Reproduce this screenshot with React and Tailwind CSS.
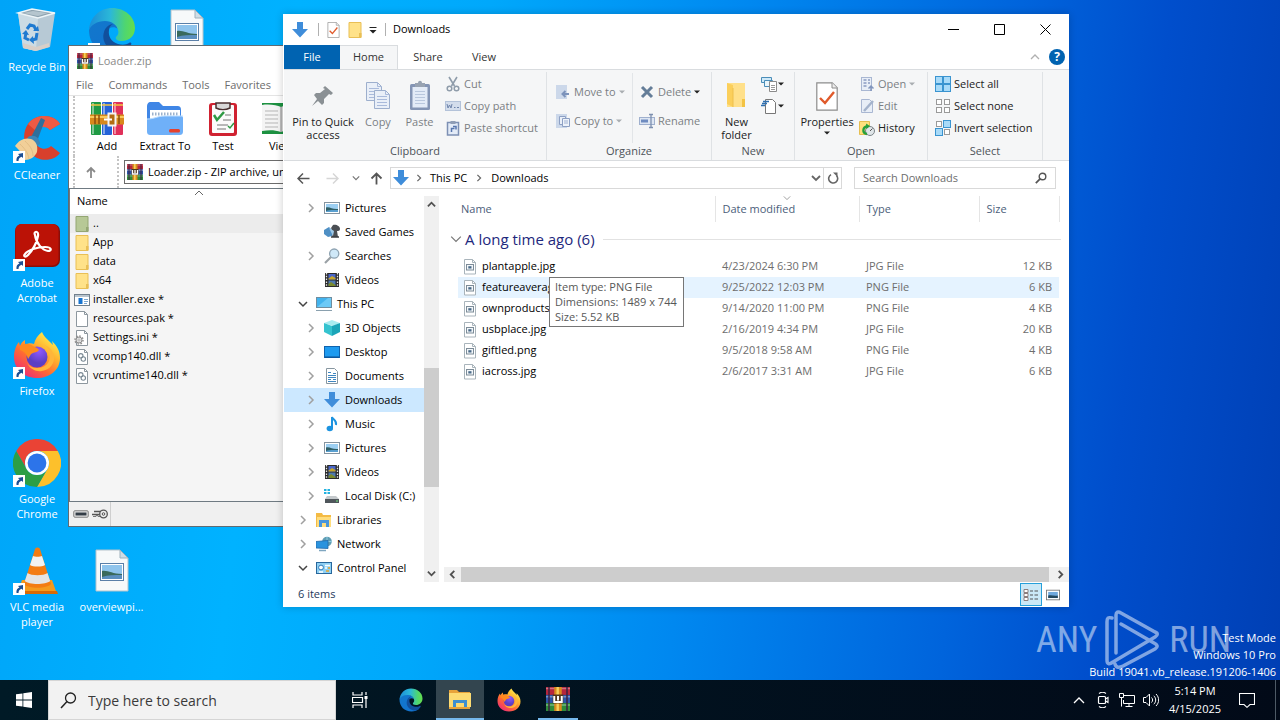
import React from 'react';

/* ---------- generic icon helper ---------- */
function Svg({ size = 16, box = 16, className = '', children }) {
  return (
    <svg
      width={size}
      height={size}
      viewBox={`0 0 ${box} ${box}`}
      fill="none"
      aria-hidden="true"
      className={`shrink-0 ${className}`}
    >
      {children}
    </svg>
  );
}

/* ---------- application logos ---------- */
function EdgeLogo({ size, id }) {
  return (
    <Svg size={size} box={48}>
      <defs>
        <linearGradient id={`${id}a`} x1="2" y1="18" x2="46" y2="20" gradientUnits="userSpaceOnUse">
          <stop offset="0" stopColor="#1c8fd8" />
          <stop offset=".45" stopColor="#2bb8d8" />
          <stop offset=".8" stopColor="#4fd66f" />
          <stop offset="1" stopColor="#63dd50" />
        </linearGradient>
        <linearGradient id={`${id}b`} x1="4" y1="16" x2="26" y2="46" gradientUnits="userSpaceOnUse">
          <stop offset="0" stopColor="#1277cc" />
          <stop offset="1" stopColor="#1273cf" />
        </linearGradient>
      </defs>
      <path d="M1 23C3 15 11 12 18 13c7 1 11 5 12 9-4-3-10-2-12 4-2 8 5 16 15 17 3 0 6-1 8-2-4 4-10 6-16 6C11 47 1 37 1 23Z" fill={`url(#${id}b)`} />
      <path d="M16 25c-3 9 4 19 14 20 5 0 10-2 13-7 1-2 0-3-2-2-3 2-7 2-11 1-7-2-10-8-9-14 0-3 2-5 4-6-4 0-8 4-9 8Z" fill="#114f9c" />
      <path d="M1 23C2 10 12 1 24 1c13 0 23 9 23 20 0 8-6 13-13 13-5 0-7-2-6-4 2-2 3-4 2-7-1-5-6-9-13-9-8 0-14 4-16 9Z" fill={`url(#${id}a)`} />
    </Svg>
  );
}

function FirefoxLogo({ size, id }) {
  return (
    <Svg size={size} box={48}>
      <defs>
        <linearGradient id={`${id}a`} x1="40" y1="5" x2="10" y2="44" gradientUnits="userSpaceOnUse">
          <stop offset="0" stopColor="#fff150" />
          <stop offset=".35" stopColor="#ffb02e" />
          <stop offset=".65" stopColor="#ff6a33" />
          <stop offset="1" stopColor="#ee2f74" />
        </linearGradient>
        <radialGradient id={`${id}b`} cx="26" cy="20" r="12" gradientUnits="userSpaceOnUse">
          <stop offset="0" stopColor="#9059ff" />
          <stop offset="1" stopColor="#5b3fc4" />
        </radialGradient>
      </defs>
      <path d="M29 1c1 3 3 5 6 8l5 5-1-4c5 5 8 10 8 17 0 12-10 20-23 20S1 38 1 26c0-6 2-12 5-15l1 4c1-3 3-5 5-6v5c3-2 6-2 9-1 1-5 4-9 8-12Z" fill={`url(#${id}a)`} />
      <circle cx="24" cy="26" r="10.5" fill={`url(#${id}b)`} />
      <path d="M7 15c4-3 9-3 13 0 2 1 5 2 6 4-1 2-4 2-6 3-3 1-3 4-5 6-1-5-4-8-8-9Z" fill="#ff8a1e" />
      <path d="M29 13c5 2 8 6 8 12 0 8-6 12-13 12-4 0-8-2-10-5 3 6 9 9 15 8 8-1 13-8 12-15-1-6-6-10-12-12Z" fill="#ffb63a" />
    </Svg>
  );
}

function ChromeLogo() {
  return (
    <Svg size={48} box={48}>
      <path d="M24 12H44.8A24 24 0 0 0 3.2 12l10.4 18A12 12 0 0 1 24 12Z" fill="#ea4335" />
      <path d="M34.4 30 24 48A24 24 0 0 0 44.8 12H24a12 12 0 0 1 10.4 18Z" fill="#fdc02b" />
      <path d="M13.6 30 3.2 12A24 24 0 0 0 24 48l10.4-18a12 12 0 0 1-20.8 0Z" fill="#2c9e46" />
      <circle cx="24" cy="24" r="12" fill="#fff" />
      <circle cx="24" cy="24" r="9.4" fill="#2c74ea" />
    </Svg>
  );
}

function AcrobatLogo() {
  return (
    <Svg size={48} box={48}>
      <rect x="2" y="1" width="45" height="43" rx="7" fill="#8b0d08" />
      <rect x="2.500" y="1" width="43" height="41.500" rx="6" fill="#bb1206" />
      <path d="M22 12c-2-4 4-5 3 1-1 7-6 15-10 19-3 3-5 1-3-1 3-4 12-7 20-7 7 0 7 4 3 4-6-1-12-8-13-16Z" stroke="#fff" strokeWidth="2.200" strokeLinejoin="round" />
    </Svg>
  );
}

function CCleanerLogo() {
  return (
    <Svg size={48} box={48}>
      <path d="M47 9C41-1 23-2 15 9c-8 12-3 28 9 34 9 4 19 1 23-5l-9-7c-3 3-8 4-12 1-6-4-6-13-1-18 4-4 9-3 12 1Z" fill="#d8402c" />
      <path d="M47 9C41-1 23-2 15 9l8 7c4-5 11-5 14-1Z" fill="#ee5a44" />
      <path d="m28 3 4 2-9 24-7-3Z" fill="#2f6f9c" />
      <path d="M15 22c5-3 12 0 12 7l-5 4-10-5Z" fill="#3c86b8" />
      <path d="M2 31c4-6 10-9 16-7 5 2 7 6 6 13-2 5-7 8-12 8C10 39 6 35 2 31Z" fill="#f1cf98" />
      <path d="M7 29c4 4 8 8 9 15M12 26c4 4 8 8 8 15" stroke="#e2bd85" />
    </Svg>
  );
}

function VlcLogo() {
  return (
    <Svg size={48} box={48}>
      <path d="M9 33h30l5 14H4Z" fill="#f59a1e" />
      <path d="M4 44h40l1 3H3Z" fill="#d96a06" />
      <path d="M22 2c1-2 4-2 5 0l11 35c-4 5-23 5-27 0Z" fill="#f37c13" />
      <path d="m20 9-3 9c3 2 12 2 15 0l-3-9c-2 1-7 1-9 0Z" fill="#f2f2f2" />
      <path d="m14.500 26-2.700 8c4 4 21 4 25.400 0l-2.700-8c-4 3-16 3-20 0Z" fill="#e4e4e4" />
    </Svg>
  );
}

function RecycleBin() {
  return (
    <Svg size={48} box={48}>
      <path d="m5 6 5 35 13 3 14-4 5-34-17 5Z" fill="#b7c9d5" />
      <path d="m5 6 5 35 13 3 2-33Z" fill="#cbdbe4" />
      <path d="m5 6 14-4 23 4-17 5Z" fill="#8fa3b0" stroke="#eef5f8" strokeWidth="1.500" />
      <path d="m10 6 10-2 15 2-10 3Z" fill="#b5c5ce" />
      <path d="m10 36 13 4 13-4v4l-13 4-13-3Z" fill="#d8cfc8" />
      <path d="m14 22 3-4 4 1 2 4M24 26l-1 6-4 1M16 33l-4-2 1-5" stroke="#1f7ad0" strokeWidth="3" />
      <path d="m20 24 6 0-1-5ZM20 29l-4 4 5 4ZM9 27l4-4 3 5Z" fill="#1f7ad0" />
    </Svg>
  );
}

function PictureFile() {
  return (
    <Svg size={48} box={48}>
      <path d="M8 3h24l8 8v33H8Z" fill="#f7f9fa" stroke="#b5c3cb" />
      <path d="M32 3v8h8Z" fill="#cfdde6" stroke="#9eb1bd" />
      <rect x="12.500" y="16.500" width="23" height="17" fill="#fff" stroke="#5a7fa8" />
      <path d="M14 18h20v14H14Z" fill="#8fc4ec" />
      <path d="M14 24c6-1 10 3 20 3v5H14Z" fill="#3a6a5c" />
      <path d="M14 30c6-2 12-2 20-2v4H14Z" fill="#5b8fbf" />
    </Svg>
  );
}

function RarLogo({ size = 16 }) {
  return (
    <Svg size={size} box={16}>
      <rect y="0" width="16" height="5.300" fill="#b5263c" />
      <rect y="5.300" width="16" height="5.400" fill="#2c55a8" />
      <rect y="10.700" width="16" height="5.300" fill="#2e8b3a" />
      <path d="M0 1h16M0 6.500h16M0 12h16" stroke="#fff" strokeOpacity=".35" />
      <path d="M2 0v16M14 0v16" stroke="#3a2140" />
      <rect x="5.500" width="5" height="16" fill="#d98b1e" />
      <rect x="7" width="1.600" height="16" fill="#f6cf5a" />
      <rect x="4.500" y="5" width="7" height="6" fill="#50361c" />
      <path d="M5.500 6v4h5V6M8 6v3" stroke="#fff" strokeWidth="1.300" />
    </Svg>
  );
}

function RarBooks() {
  return (
    <Svg size={36} box={36}>
      <rect x="2" y="1" width="10" height="33" rx="1" fill="#1f9a44" />
      <rect x="13" y="1" width="10" height="33" rx="1" fill="#2563d8" />
      <rect x="24" y="1" width="10" height="33" rx="1" fill="#e0305a" />
      <path d="M4 2v31M15 2v31M26 2v31" stroke="#fff" strokeOpacity=".45" strokeWidth="2" />
      <path d="M2 4h10M13 4h10M24 4h10" stroke="#f4c542" strokeWidth="1.500" />
      <rect x="1" y="13.500" width="34" height="10" fill="#d8891c" />
      <path d="M1 16h34" stroke="#f8c95c" strokeWidth="2" />
      <path d="M6 14v9M10 14v9M30 14v9" stroke="#8a4f0c" strokeWidth="1.500" />
      <rect x="19.500" y="12.500" width="7" height="12" stroke="#f4f4f4" strokeWidth="2" fill="#b26c12" />
      <path d="M15 18.500h8" stroke="#fff" strokeWidth="2" />
    </Svg>
  );
}

function ExtractIcon() {
  return (
    <Svg size={38} box={38}>
      <path d="M1 7c0-3 1-5 4-5h8l4 4h14c3 0 4 1 4 4v14H1Z" fill="#3f86e6" />
      <path d="M4 10h30v10H4Z" fill="#fff" />
      <path d="M6 14h26" stroke="#9cb2cc" strokeWidth="3" strokeDasharray="1.500 1.500" />
      <path d="M1 19c8 0 10-3 18-3h16c2 0 2 1 2 3v12c0 3-1 4-4 4H5c-3 0-4-1-4-4Z" fill="#6fb0f8" />
      <path d="M1 19c8 0 10-3 18-3h18" stroke="#b9dcff" />
      <rect x="23" y="29" width="11" height="3.500" rx="1.500" fill="#e5412d" />
    </Svg>
  );
}

function TestIcon() {
  return (
    <Svg size={36} box={36}>
      <rect x="4" y="2" width="28" height="33" rx="3" fill="#d02231" />
      <rect x="7" y="4" width="22" height="28" rx="1" fill="#fbfbfb" />
      <path d="M11 2h14v5c-4 2-10 2-14 0Z" fill="#d8d8d8" stroke="#4a3030" strokeWidth="1.500" />
      <path d="m9 14 3 5 7-8" stroke="#2e9a44" strokeWidth="2.500" />
      <path d="M20 14h6M18 19h8M12 24h11M12 28h9" stroke="#777" strokeWidth="1.200" />
      <path d="m23 25 2 2 4-5" stroke="#2e9a44" strokeWidth="1.500" />
    </Svg>
  );
}

function ViewIcon() {
  return (
    <Svg size={38} box={38}>
      <path d="M-3 3h41v31H-3Z" fill="#1d9141" />
      <path d="M0 5c7-1 15 0 19 2v25c-6-2-12-2-19-1Z" fill="#f4f4f4" />
      <path d="M35 5c-6-1-12 0-16 2v25c5-2 10-2 16-1Z" fill="#dedede" />
      <path d="M3 11h13M3 15h13M3 19h13M3 23h13M3 27h13" stroke="#b5b5b5" />
      <path d="M19 7v25" stroke="#888" />
    </Svg>
  );
}

/* ---------- small file-system icons ---------- */
const DownArrow = ({ size = 16 }) => (
  <Svg size={size}>
    <path d="M5 0h6v7h5l-8 8.500L0 7h5Z" fill="#3f8dda" />
  </Svg>
);
const FolderTall = ({ fill = '#ffe289', edge = '#e9bf55' }) => (
  <Svg>
    <path d="M2 .5h12v15H2Z" fill={fill} stroke={edge} />
    <path d="M12 11h2.500v4.500H12Z" fill={edge} />
  </Svg>
);
const ExeIcon = () => (
  <Svg>
    <rect x=".5" y="2.500" width="15" height="11" fill="#fff" stroke="#72808c" />
    <path d="M1 3h14v2H1Z" fill="#b9c4cd" />
    <rect x="4.500" y="6" width="4" height="6" fill="#1874cf" />
    <path d="M10 7.500h4M10 9.500h4M10 11.500h3" stroke="#7aa7d0" />
  </Svg>
);
const PaperIcon = ({ children }) => (
  <Svg>
    <path d="M2.500.5h8l3 3v12h-11Z" fill="#fff" stroke="#8d979e" />
    <path d="M10.500.5v3h3" stroke="#8d979e" />
    {children}
  </Svg>
);
const IniIcon = () => (
  <PaperIcon>
    <circle cx="5" cy="10" r="4" stroke="#8f8f8f" strokeWidth="1.500" strokeDasharray="1.600 1.500" />
    <circle cx="5" cy="10" r="3" fill="#e2e2e2" stroke="#8f8f8f" />
    <circle cx="5" cy="10" r="1" fill="#fff" stroke="#999" strokeWidth=".6" />
  </PaperIcon>
);
const DllIcon = () => (
  <PaperIcon>
    <circle cx="6.800" cy="6.800" r="2.200" stroke="#7b8a95" strokeWidth="1.100" />
    <circle cx="9.300" cy="10" r="2.200" stroke="#7b8a95" strokeWidth="1.100" />
  </PaperIcon>
);
const ImgFileIcon = () => (
  <Svg>
    <path d="M2.500.5h8l3 3v11.500h-11Z" fill="#fff" stroke="#a9b4bb" />
    <path d="M10.500.5v3h3" stroke="#a9b4bb" />
    <rect x="4.500" y="5.500" width="7" height="5.500" fill="#f3f7fa" stroke="#7d8c98" />
    <rect x="6.300" y="7.200" width="3.200" height="2.300" fill="#4a6a88" />
  </Svg>
);
const PicturesIcon = () => (
  <Svg>
    <rect x=".5" y="2.500" width="15" height="11" fill="#fff" stroke="#8594a0" />
    <path d="M2 4h12v8H2Z" fill="#9ccff2" />
    <path d="M2 7.500c4-1 6 2 12 1.500v3H2Z" fill="#2f5f66" />
    <path d="M2 11c4-1.500 8-1 12-1v2H2Z" fill="#5aa0d0" />
  </Svg>
);
const SavedGamesIcon = () => (
  <Svg>
    <path d="M0 6l5-3 3 3v6l-4 1-4-3Z" fill="#4f8fc4" />
    <path d="M9 1c3-1 7 1 7 4 0 2-2 2-3 2l1 6H8l1-5-2-4Z" fill="#4b4f54" />
    <path d="m5 4 4 8 1-5Z" fill="#9ec9e8" />
    <path d="M7 13h8" stroke="#3a3d40" strokeWidth="1.500" />
  </Svg>
);
const SearchesIcon = () => (
  <Svg>
    <path d="m1 15 6-6" stroke="#9aa1a6" strokeWidth="2.200" />
    <circle cx="10.200" cy="5.600" r="4.600" fill="#cfe8f8" stroke="#8ea3b2" strokeWidth="1.300" />
  </Svg>
);
const VideosIcon = () => (
  <Svg>
    <rect x="1" y="1" width="14" height="14" fill="#2b2b2b" />
    <path d="M2.500 1v14M13.500 1v14" stroke="#e8e8e8" strokeWidth="1.300" strokeDasharray="1.500 1.300" />
    <rect x="4.500" y="2" width="7" height="5.500" fill="#4a66c8" />
    <path d="M4.500 6.500 8 4l3.500 2v1.500h-7Z" fill="#c6a62c" />
    <rect x="4.500" y="8.500" width="7" height="5.500" fill="#4f7ab0" />
    <path d="M4.500 12 7 10l4.500 3v1h-7Z" fill="#7b8a2c" />
  </Svg>
);
const PcIcon = () => (
  <Svg>
    <rect x=".5" y="1.500" width="15" height="10" fill="#42b3ee" stroke="#6f8d9f" />
    <path d="M1 11 12 2h3v9Z" fill="#6cc9f6" />
    <path d="M0 14.500h16" stroke="#8aa0ae" />
  </Svg>
);
const CubeIcon = () => (
  <Svg>
    <path d="m8 0 8 3-7 3-9-3Z" fill="#a9ecf0" />
    <path d="m0 3 8 3v10l-8-4Z" fill="#35c3cf" />
    <path d="m16 3-8 3v10l8-4Z" fill="#1ba5b8" />
  </Svg>
);
const DesktopIcon = () => (
  <Svg>
    <rect x=".5" y="2.500" width="15" height="11" fill="#1e9bf0" stroke="#0f63ae" />
    <path d="M1 13h14" stroke="#0c4f90" />
  </Svg>
);
const DocumentsIcon = () => (
  <Svg>
    <path d="M2.500.5h8l3 3v12h-11Z" fill="#fff" stroke="#8796a0" />
    <path d="M4 4.500h3M9 5.500h3M4 7.500h8M4 9.500h8M4 11.500h3M9 11.500h3M4 13.500h8" stroke="#3f86c0" strokeWidth="1" />
  </Svg>
);
const MusicIcon = () => (
  <Svg>
    <path d="M8 12V1c1 3 5 3 4 8" stroke="#1c93e0" strokeWidth="2" />
    <ellipse cx="5.800" cy="12.500" rx="3.200" ry="2.700" fill="#1c93e0" />
  </Svg>
);
const DiskIcon = () => (
  <Svg>
    <path d="M0 1h2.500v2H0ZM3.500 1H6v2H3.500ZM0 4h2.500v2H0ZM3.500 4H6v2H3.500Z" fill="#22b2e0" />
    <path d="M3 8h9l3 3H1Z" fill="#c4c9cc" />
    <path d="M1 11h14v4H1Z" fill="#4f565b" />
    <path d="M12 13h2" stroke="#6fe27a" />
  </Svg>
);
const LibrariesIcon = () => (
  <Svg>
    <path d="M0 1h6l1 2h8v12H0Z" fill="#f4bb45" />
    <path d="M1 5h14v10H1Z" fill="#ffdd7d" />
    <path d="M3 15V8h10v7h-3v-4H6v4Z" fill="#4896dc" />
  </Svg>
);
const NetworkIcon = () => (
  <Svg>
    <circle cx="11" cy="5.500" r="4.800" fill="#5f9db4" />
    <path d="M7 5.500h9M11 1v10" stroke="#8fcbe0" />
    <path d="m0 5.500 12-1v8L0 12Z" fill="#2b93de" stroke="#2167a8" strokeWidth=".8" />
    <path d="M3 14.500h7" stroke="#7fa6c0" strokeWidth="1.500" />
  </Svg>
);
const ControlPanelIcon = () => (
  <Svg>
    <rect x=".5" y="2.500" width="15" height="11" fill="#8fd0f4" stroke="#28679c" />
    <circle cx="5" cy="7.500" r="2.400" fill="#fff" stroke="#2f7ab8" />
    <path d="M9 5.500h5M9 8h2M3 12h4" stroke="#fff" strokeWidth="1.500" />
    <path d="M12 8h2M10 11h3" stroke="#e6a42a" strokeWidth="1.500" />
  </Svg>
);

/* ---------- glyphs ---------- */
const Chevron = ({ d, size = 10, color = '#666', w = 1.5 }) => (
  <Svg size={size} box={10}>
    <path d={d} stroke={color} strokeWidth={w} />
  </Svg>
);
const DOWN = 'm1 3 4 4 4-4';
const UP = 'm1 7 4-4 4 4';
const RIGHT = 'm3 1 4 4-4 4';
const LEFT = 'm7 1-4 4 4 4';
const Caret = ({ color = '#222' }) => (
  <Svg size={6} box={6}>
    <path d="M0 1.500h6l-3 3Z" fill={color} />
  </Svg>
);
const CheckPaper = ({ w, h }) => (
  <svg width={w} height={h} viewBox="0 0 22 29" fill="none" aria-hidden="true">
    <path d="M.8.8h15.400l5 5v22.400H.8Z" fill="#fff" stroke="#8c8c8c" strokeWidth="1.200" />
    <path d="M16 .8V6h5.200" fill="#eee" stroke="#8c8c8c" />
    <path d="m4 16 5 5 9-11" stroke="#e05a2b" strokeWidth="2.400" />
  </svg>
);

/* ---------- desktop ---------- */
function Shortcut({ label, place, arrow = true, children }) {
  return (
    <button type="button" aria-label={label} className={`flex flex-col items-center pt-[7px] ${place}`}>
      <span className="relative block size-12">
        {children}
        {arrow && (
          <Svg size={12} box={12} className="absolute bottom-0 left-0">
            <path d="M0 0h12v12H0Z" fill="#fff" />
            <path d="M3.500 10C3 7 4.500 5 6.500 4.500L5 3l5-1v5L8.500 5.800C6.500 6.500 5.500 8 5.500 10Z" fill="#1d4f93" />
          </Svg>
        )}
      </span>
      {label && <span className="w-[64px] whitespace-normal pt-[4px] text-center text-[11px] leading-[15px] text-white">{label}</span>}
    </button>
  );
}

function Desktop() {
  return (
    <div className="grid w-fit grid-cols-[74px_75px_75px] grid-rows-[repeat(6,108px)]">
      <Shortcut label="Recycle Bin" arrow={false} place="col-start-1 row-start-1"><RecycleBin /></Shortcut>
      <Shortcut label="CCleaner" place="col-start-1 row-start-2"><CCleanerLogo /></Shortcut>
      <Shortcut label="Adobe Acrobat" place="col-start-1 row-start-3"><AcrobatLogo /></Shortcut>
      <Shortcut label="Firefox" place="col-start-1 row-start-4"><FirefoxLogo size={48} id="fxd" /></Shortcut>
      <Shortcut label="Google Chrome" place="col-start-1 row-start-5"><ChromeLogo /></Shortcut>
      <Shortcut label="VLC media player" place="col-start-1 row-start-6"><VlcLogo /></Shortcut>
      <Shortcut place="col-start-2 row-start-1"><EdgeLogo size={48} id="edd" /></Shortcut>
      <Shortcut label="overviewpi..." arrow={false} place="col-start-2 row-start-6"><PictureFile /></Shortcut>
      <Shortcut arrow={false} place="col-start-3 row-start-1"><PictureFile /></Shortcut>
    </div>
  );
}

/* ---------- archive window ---------- */
const archiveItems = [
  ['..', <FolderTall fill="#b7c896" edge="#94a673" />],
  ['App', <FolderTall />],
  ['data', <FolderTall />],
  ['x64', <FolderTall />],
  ['installer.exe *', <ExeIcon />],
  ['resources.pak *', <PaperIcon />],
  ['Settings.ini *', <IniIcon />],
  ['vcomp140.dll *', <DllIcon />],
  ['vcruntime140.dll *', <DllIcon />],
];

function ArchiveWindow() {
  return (
    <section aria-label="Loader.zip" className="absolute left-[68px] top-[45px] flex h-[482px] w-[480px] flex-col border border-[#5f6b73] bg-white text-[11px]">
      <header className="flex h-[30px] items-center gap-[5px] pl-2 text-[#8a8a8a]">
        <RarLogo />
        <span>Loader.zip</span>
      </header>
      <nav className="flex h-5 items-center gap-[15px] border-b border-[#e4e4e4] pl-[7px] text-[#6d6d6d]">
        <button type="button">File</button>
        <button type="button">Commands</button>
        <button type="button">Tools</button>
        <button type="button">Favorites</button>
      </nav>
      <div className="flex h-[60px] pl-[4px]">
        <div className="flex border-l-2 border-dotted border-[#c4c4c4] pl-[3px] leading-4">
          {[
            ['Add', <RarBooks />],
            ['Extract To', <ExtractIcon />],
            ['Test', <TestIcon />],
            ['View', <ViewIcon />],
          ].map(([t, icon]) => (
            <button key={t} type="button" className="flex w-[58px] flex-col items-center pt-[4px]">
              <span className="flex h-[38px] items-center">{icon}</span>
              <span className="whitespace-nowrap">{t}</span>
            </button>
          ))}
        </div>
      </div>
      <div className="flex h-[32px] items-center pl-[4px]">
        <div className="flex h-full w-[46px] items-center border-l-2 border-r-2 border-dotted border-[#c4c4c4] pl-[10px]">
          <button type="button" aria-label="Up">
            <Svg size={12} box={12}><path d="M6 12V2M2 6l4-4 4 4" stroke="#8a8a8a" strokeWidth="1.800" /></Svg>
          </button>
        </div>
        <div className="ml-[5px] flex h-6 flex-1 items-center gap-[5px] border border-[#6b6b6b] bg-white pl-[2px]">
          <RarLogo />
          <input aria-label="Address" readOnly value="Loader.zip - ZIP archive, unpacked size" className="w-full bg-transparent outline-none" />
        </div>
      </div>
      <div className="flex flex-1 flex-col border-b border-l border-t border-[#6f7a82] bg-[#f5f5f5]">
        <div className="relative flex h-[25px] items-center bg-white pl-[7px]">
          Name
          <span className="absolute left-[124px] top-[-1px]"><Chevron d={UP} w={1} /></span>
        </div>
        <ul>
          {archiveItems.map(([name, icon], i) => (
            <li key={name} className={`flex h-[19px] items-center gap-[3px] pl-[4px] ${i === 0 ? 'bg-[#ececec]' : ''}`}>
              {icon}
              <span>{name}</span>
            </li>
          ))}
        </ul>
      </div>
      <footer className="flex h-6 items-center bg-[#f0f0f0] pl-1">
        <div className="flex h-full items-center gap-[3px] border-r border-[#cfcfcf] pr-[2px]">
          <Svg><rect x=".8" y="4.800" width="14.400" height="6.400" rx="1" fill="#e8e8e8" stroke="#777" /><rect x="2.500" y="6.500" width="11" height="3" fill="#333c46" /></Svg>
          <Svg>
            <path d="M2 5.500h8M0 8.500h8" stroke="#555" strokeWidth="1.400" />
            <path d="M1 10.500h3v-1h2v1h2" stroke="#777" />
            <circle cx="11.500" cy="8" r="3.800" fill="#eee" stroke="#555" strokeWidth="1.300" />
            <circle cx="11.500" cy="8" r="1.300" stroke="#555" />
          </Svg>
        </div>
      </footer>
    </section>
  );
}

/* ---------- file manager ribbon ---------- */
function Big({ icon, children, muted, width, caret }) {
  return (
    <button type="button" className={`flex flex-col items-center pt-[4px] leading-[13px] ${width} ${muted ? 'text-[#7b7f84]' : 'text-[#222]'}`}>
      <span className="flex h-[38px] items-center justify-center">{icon}</span>
      <span>{children}</span>
      {caret && <span className="pt-[2px]"><Caret /></span>}
    </button>
  );
}
function Small({ icon, children, muted, caret }) {
  return (
    <button type="button" className={`flex h-[22px] items-center gap-[3px] whitespace-nowrap ${muted ? 'text-[#7b7f84]' : 'text-[#222]'}`}>
      {icon}
      <span>{children}</span>
      {caret && <Caret color={caret} />}
    </button>
  );
}
function Group({ title, width, children }) {
  return (
    <div className={`flex flex-col border-r border-[#dfe2e5] ${width}`}>
      <div className="flex h-[71px] pt-[1px]">{children}</div>
      <div className="text-center leading-[15px] text-[#4d5359]">{title}</div>
    </div>
  );
}

const PinIcon = () => (
  <Svg size={26} box={26}>
    <path d="m15 3 8 7-2 2-2-1-5 5 0 4-2 2-4-4-6 5 5-7-3-4 2-2h4l5-4-2-1Z" fill="#8a9094" />
  </Svg>
);
const CopyBig = () => (
  <Svg size={32} box={32}>
    {[[4, 2], [12, 10]].map(([x, y]) => (
      <g key={x} transform={`translate(${x} ${y})`}>
        <path d="M.5.5h11l4 4v14H.5Z" fill="#e9eff8" stroke="#9dafcd" />
        <path d="M11.500.5v4h4M3 6.500h10M3 9.500h10M3 12.500h10M3 15.500h10" stroke="#a9badb" />
      </g>
    ))}
  </Svg>
);
const PasteBig = () => (
  <Svg size={32} box={32}>
    <rect x="6" y="4" width="20" height="26" rx="1.500" fill="#8495b5" />
    <rect x="8.500" y="7" width="15" height="20.500" fill="#e3ebf7" />
    <path d="M11 3h3c0-3 4-3 4 0h3v4H11Z" fill="#98a3b2" />
    <path d="M11 11.500h10M11 14.500h10M11 17.500h10M11 20.500h10M11 23.500h10" stroke="#b9c7dd" />
  </Svg>
);
const CutIcon = () => (
  <Svg>
    <path d="M4 1l5.500 9M12 1 6.500 10" stroke="#8f9caa" strokeWidth="1.600" />
    <circle cx="4.500" cy="12.500" r="2.300" stroke="#8f9caa" strokeWidth="1.500" />
    <circle cx="11.500" cy="12.500" r="2.300" stroke="#8f9caa" strokeWidth="1.500" />
  </Svg>
);
const CopyPathIcon = () => (
  <Svg>
    <rect x=".5" y="3.500" width="15" height="9" fill="#d3ddec" stroke="#b3c2d9" />
    <path d="m2 6 1 4 1.500-3L6 10l1-4M9 9.500h1.500M12 9.500h2" stroke="#6e84ab" />
  </Svg>
);
const PasteShortcutIcon = () => (
  <Svg>
    <rect x="2.500" y="2.500" width="11" height="12.500" fill="#e3ebf7" stroke="#7d90b4" strokeWidth="1.500" />
    <path d="M5.500 1h5v3h-5Z" fill="#8f9db5" />
    <path d="M6.500 12V8.500h3M8 6.500h3v3" stroke="#5776ae" strokeWidth="1.500" />
  </Svg>
);
const MoveIcon = () => (
  <Svg>
    <path d="M1 1h11v14H1Z" fill="#ccd8ea" />
    <path d="M14 10H8M10.500 7 7.500 10l3 3" stroke="#7c93bb" strokeWidth="2" />
  </Svg>
);
const CopyToIcon = () => (
  <Svg>
    <path d="M1 1h11v14H1Z" fill="#ccd8ea" />
    <path d="M4.500 3.500h6v8h-6Z" fill="#e9eff8" stroke="#8da0c4" />
    <path d="M7.500 5.500h7v8h-7Z" fill="#eef3fa" stroke="#8da0c4" />
    <path d="M9 8h4M9 10h4" stroke="#9fb1d2" />
  </Svg>
);
const DeleteIcon = () => (
  <Svg><path d="m3 3 10 10M13 3 3 13" stroke="#647d98" strokeWidth="3" /></Svg>
);
const RenameIcon = () => (
  <Svg>
    <rect x=".5" y="4.500" width="15" height="7" fill="#dde6f3" stroke="#9fb0ce" />
    <path d="M2 8h7" stroke="#6f8cc0" strokeWidth="3" />
    <path d="M12 2v12M10 1.500h4M10 14.500h4" stroke="#7c8faf" strokeWidth="1.300" />
  </Svg>
);
const NewFolderIcon = () => (
  <Svg size={32} box={32}>
    <path d="M6 3h18v24H6Z" fill="#ffe08a" />
    <path d="M6 3l6 2v22l-6-3Z" fill="#fbcf5b" />
    <path d="M12 8v19" stroke="#eebf4d" />
    <path d="M21 19h3v8h-3Z" fill="#f3c344" />
  </Svg>
);
const NewItemIcon = () => (
  <Svg>
    <path d="M.5 1.500h10v5H.5Z" fill="#cfe9f8" stroke="#4a8db8" />
    <path d="M3.500 4.500h8v6h-8Z" fill="#e9f5fb" stroke="#4a8db8" />
    <path d="M8.500 5.500h7v10h-7Z" fill="#fff" stroke="#8b8b8b" />
    <path d="M10 9.500h4M10 11.500h4M10 13.500h4" stroke="#999" />
  </Svg>
);
const EasyAccessIcon = () => (
  <Svg>
    <path d="M4.500 1.500h7l3 3v11h-10Z" fill="#fff" stroke="#777" />
    <path d="M2 3.500h6M1 5.500h5M0 7.500h4" stroke="#2f6fb0" strokeWidth="1.300" />
  </Svg>
);
const OpenIcon = () => (
  <Svg>
    <rect x="2.500" y="1.500" width="10" height="13" fill="#e8eef7" stroke="#a9b7d2" />
    <path d="M4.500 4h3M4.500 7h3M4.500 10h3M9 4h2M9 7h2" stroke="#8b9cc2" strokeWidth="1.500" />
    <path d="M12 15v-5M9.500 12.500 12 10l2.500 2.500" stroke="#8296bd" strokeWidth="1.500" />
  </Svg>
);
const EditIcon = () => (
  <Svg>
    <path d="M2.500 1.500h8l3 3v10h-11Z" fill="#e8eef7" stroke="#a9b7d2" />
    <path d="m5 13 9-10" stroke="#a4b3cc" strokeWidth="2.500" />
  </Svg>
);
const HistoryIcon = () => (
  <Svg>
    <path d="M.5 1.500h10v13H.5Z" fill="#ffe07e" stroke="#e5be50" />
    <circle cx="11" cy="11" r="4.500" fill="#dfe5e8" stroke="#7c8488" />
    <path d="M11 11l2.500-2.500" stroke="#555" />
    <path d="M8 14C3 13 3 7 9 6" stroke="#27a03b" strokeWidth="2.300" />
    <path d="M7 3.500 11 6 7.500 9Z" fill="#27a03b" />
  </Svg>
);
function SelectIcon({ on }) {
  return (
    <Svg>
      {[[1, 1], [9, 1], [1, 9], [9, 9]].map(([x, y], i) => (
        <rect key={i} x={on[i] ? x - 0.5 : x + 0.5} y={on[i] ? y - 0.5 : y + 0.5} width={on[i] ? 7 : 5} height={on[i] ? 7 : 5} fill={on[i] ? '#a8daf8' : '#fff'} stroke={on[i] ? '#3a94d0' : '#9a9a9a'} />
      ))}
    </Svg>
  );
}

function Ribbon() {
  return (
    <div className="flex h-[92px] border-b border-t border-[#d9dcdf] bg-[#f5f6f7] pt-[2px] text-[11px]">
      <Group title="Clipboard" width="w-[263px]">
        <Big width="w-[78px]" icon={<PinIcon />}>Pin to Quick access</Big>
        <Big width="w-[32px]" muted icon={<CopyBig />}>Copy</Big>
        <Big width="w-[51px]" muted icon={<PasteBig />}>Paste</Big>
        <div className="flex flex-col">
          <Small muted icon={<CutIcon />}>Cut</Small>
          <Small muted icon={<CopyPathIcon />}>Copy path</Small>
          <Small muted icon={<PasteShortcutIcon />}>Paste shortcut</Small>
        </div>
      </Group>
      <Group title="Organize" width="w-[165px]">
        <div className="flex w-[86px] flex-col gap-[7px] border-r border-[#e2e5e8] pl-[8px] pt-[8px]">
          <Small muted caret="#a9adb1" icon={<MoveIcon />}>Move to</Small>
          <Small muted caret="#a9adb1" icon={<CopyToIcon />}>Copy to</Small>
        </div>
        <div className="flex flex-col gap-[7px] pl-[6px] pt-[8px]">
          <Small muted caret="#222" icon={<DeleteIcon />}>Delete</Small>
          <Small muted icon={<RenameIcon />}>Rename</Small>
        </div>
      </Group>
      <Group title="New" width="w-[83px]">
        <Big width="w-[49px]" icon={<NewFolderIcon />}>New folder</Big>
        <div className="flex flex-col">
          <button type="button" aria-label="New item" className="flex h-[22px] items-center gap-px"><NewItemIcon /><Caret /></button>
          <button type="button" aria-label="Easy access" className="flex h-[22px] items-center gap-px"><EasyAccessIcon /><Caret /></button>
        </div>
      </Group>
      <Group title="Open" width="w-[133px]">
        <Big width="w-[64px]" caret icon={<CheckPaper w={22} h={29} />}>Properties</Big>
        <div className="flex flex-col">
          <Small muted caret="#a9adb1" icon={<OpenIcon />}>Open</Small>
          <Small muted icon={<EditIcon />}>Edit</Small>
          <Small icon={<HistoryIcon />}>History</Small>
        </div>
      </Group>
      <Group title="Select" width="w-[115px]">
        <div className="flex flex-col pl-[7px]">
          <Small icon={<SelectIcon on={[1, 1, 1, 1]} />}>Select all</Small>
          <Small icon={<SelectIcon on={[0, 0, 0, 0]} />}>Select none</Small>
          <Small icon={<SelectIcon on={[0, 1, 1, 0]} />}>Invert selection</Small>
        </div>
      </Group>
    </div>
  );
}

/* ---------- file manager body ---------- */
const tree = [
  ['Pictures', PicturesIcon, 1, 'closed'],
  ['Saved Games', SavedGamesIcon, 1, 'none'],
  ['Searches', SearchesIcon, 1, 'closed'],
  ['Videos', VideosIcon, 1, 'none'],
  ['This PC', PcIcon, 0, 'open'],
  ['3D Objects', CubeIcon, 1, 'closed'],
  ['Desktop', DesktopIcon, 1, 'closed'],
  ['Documents', DocumentsIcon, 1, 'closed'],
  ['Downloads', DownArrow, 1, 'closed'],
  ['Music', MusicIcon, 1, 'closed'],
  ['Pictures', PicturesIcon, 1, 'closed'],
  ['Videos', VideosIcon, 1, 'closed'],
  ['Local Disk (C:)', DiskIcon, 1, 'closed'],
  ['Libraries', LibrariesIcon, 0, 'closed'],
  ['Network', NetworkIcon, 0, 'closed'],
  ['Control Panel', ControlPanelIcon, 0, 'open'],
];

function Tree() {
  return (
    <ul className="w-[140px] overflow-hidden text-[11px]">
      {tree.map(([name, Icon, depth, state], i) => (
        <li key={i}>
          <button
            type="button"
            className={`flex h-6 w-full items-center whitespace-nowrap ${depth ? 'pl-[22px]' : 'pl-[14px]'} ${name === 'Downloads' ? 'bg-[#cce8ff]' : ''}`}
          >
            <span className="mr-[8px] flex w-[10px] justify-center">
              {state === 'closed' && <Chevron d={RIGHT} color="#a0a0a0" />}
              {state === 'open' && <Chevron d={DOWN} color="#444" />}
            </span>
            <Icon />
            <span className="pl-[5px]">{name}</span>
          </button>
        </li>
      ))}
    </ul>
  );
}

const files = [
  ['plantapple.jpg', '4/23/2024 6:30 PM', 'JPG File', '12 KB'],
  ['featureaverage.png', '9/25/2022 12:03 PM', 'PNG File', '6 KB'],
  ['ownproducts.png', '9/14/2020 11:00 PM', 'PNG File', '4 KB'],
  ['usbplace.jpg', '2/16/2019 4:34 PM', 'JPG File', '20 KB'],
  ['giftled.png', '9/5/2018 9:58 AM', 'PNG File', '4 KB'],
  ['iacross.jpg', '2/6/2017 3:31 AM', 'JPG File', '6 KB'],
];

function FileTable() {
  return (
    <table className="w-full table-fixed border-collapse text-left text-[11px]">
      <colgroup>
        <col className="w-[14px]" />
        <col />
        <col className="w-[144px]" />
        <col className="w-[120px]" />
        <col className="w-[80px]" />
        <col className="w-[10px]" />
      </colgroup>
      <thead>
        <tr className="h-[26px] text-[#4c607a]">
          <td />
          <th className="border-r border-[#e5e5e5] p-0 pl-[3px] font-normal">Name</th>
          <th className="relative border-r border-[#e5e5e5] p-0 pl-[7px] font-normal">
            Date modified
            <span className="absolute left-[67px] top-[-2px]"><Chevron d={DOWN} size={8} color="#888" w={1} /></span>
          </th>
          <th className="border-r border-[#e5e5e5] p-0 pl-[7px] font-normal">Type</th>
          <th className="border-r border-[#e5e5e5] p-0 pl-[7px] font-normal">Size</th>
          <td />
        </tr>
      </thead>
      <tbody>
        <tr className="h-[34px]">
          <td colSpan={6} className="p-0">
            <div className="flex items-center pl-[6px] pr-[8px] text-[15px] text-[#1e287d]">
              <Chevron d={DOWN} size={12} color="#777" w={1} />
              <span className="pl-[3px] pr-[8px]">A long time ago (6)</span>
              <span className="h-px flex-1 bg-[#e2e2e2]" />
            </div>
          </td>
        </tr>
        {files.map(([name, date, type, size], i) => {
          const bg = i === 1 ? 'bg-[#e5f3ff]' : '';
          return (
            <tr key={name} className="h-[21px] text-[#6d6d6d]">
              <td />
              <td className={`p-0 ${bg}`}>
                <span className="flex items-center gap-1 pl-1 text-black"><ImgFileIcon />{name}</span>
              </td>
              <td className={`p-0 pl-[7px] ${bg}`}>{date}</td>
              <td className={`p-0 pl-[7px] ${bg}`}>{type}</td>
              <td className={`p-0 pr-[7px] text-right ${bg}`}>{size}</td>
              <td />
            </tr>
          );
        })}
      </tbody>
    </table>
  );
}

function ExplorerWindow() {
  return (
    <section aria-label="Downloads" className="absolute left-[283px] top-[14px] flex h-[593px] w-[786px] flex-col bg-white pl-px text-[11px] shadow-[0_0_8px_rgba(0,0,0,0.2)]">
      <header className="flex h-[31px] items-center pl-[8px] pr-px">
        <DownArrow />
        <span className="ml-[10px] mr-[8px] h-[13px] w-px bg-[#b0b0b0]" />
        <CheckPaper w={13} h={16} />
        <span className="ml-[7px]"><FolderTall /></span>
        <Svg size={10} box={10} className="ml-[5px]"><path d="M1.500 2.500h7" stroke="#222" /><path d="M1.500 5h7L5 8.500Z" fill="#222" /></Svg>
        <span className="ml-[7px] mr-[7px] h-[13px] w-px bg-[#b0b0b0]" />
        <span className="flex-1">Downloads</span>
        <button type="button" aria-label="Minimize" className="flex w-[46px] justify-center"><Svg size={11} box={11}><path d="M0 5.500h11" stroke="#000" /></Svg></button>
        <button type="button" aria-label="Maximize" className="flex w-[46px] justify-center"><Svg size={11} box={11}><path d="M.5.5h10v10H.5Z" stroke="#000" /></Svg></button>
        <button type="button" aria-label="Close" className="flex w-[46px] justify-center"><Svg size={11} box={11}><path d="m.5.5 10 10m0-10-10 10" stroke="#000" /></Svg></button>
      </header>
      <nav className="flex h-6 text-[#333]">
        <button type="button" className="w-[56px] bg-[#0063b1] text-white">File</button>
        <button type="button" className="-mb-px w-[58px] border-r border-t border-[#d9dcdf] bg-[#f5f6f7] pb-[2px]">Home</button>
        <button type="button" className="w-[60px]">Share</button>
        <button type="button" className="w-[52px]">View</button>
        <span className="flex flex-1 items-center justify-end gap-[9px] pr-[4px]">
          <Chevron d={UP} color="#b0b0b0" w={1.300} />
          <button type="button" aria-label="Help" className="flex size-4 items-center justify-center rounded-full bg-[#0063b1] text-[12px] font-bold leading-4 text-white">?</button>
        </span>
      </nav>
      <Ribbon />
      <div className="flex h-[34px] items-center pr-[13px]">
        <button type="button" aria-label="Back" className="ml-[13px]"><Svg size={13} box={13}><path d="M12.500 6.500H1.500M6 1.500l-5 5 5 5" stroke="#555" strokeWidth="1.500" /></Svg></button>
        <button type="button" aria-label="Forward" className="ml-[16px]"><Svg size={13} box={13}><path d="M.5 6.500h11M7 1.500l5 5-5 5" stroke="#d6d6d6" strokeWidth="1.500" /></Svg></button>
        <span className="ml-[13px]"><Chevron d={DOWN} size={8} color="#777" /></span>
        <button type="button" aria-label="Up" className="ml-[10px]"><Svg size={13} box={13}><path d="M6.500 12.500V1.500M1.500 6.500l5-5 5 5" stroke="#555" strokeWidth="1.800" /></Svg></button>
        <div className="ml-[7px] flex h-[22px] flex-1 items-center border border-[#d9d9d9] pl-[2px]">
          <DownArrow />
          <span className="ml-[6px] mr-[7px]"><Chevron d={RIGHT} size={8} color="#666" /></span>
          <span>This PC</span>
          <span className="mx-[8px]"><Chevron d={RIGHT} size={8} color="#666" /></span>
          <span className="flex-1">Downloads</span>
          <Chevron d={DOWN} color="#666" w={1.800} />
          <button type="button" aria-label="Refresh" className="ml-[2px] flex h-5 w-[18px] items-center justify-center border-l border-[#d9d9d9]">
            <Svg size={12} box={12}><path d="M9.500 3.500A4.500 4.500 0 1 1 4 2.600" stroke="#666" strokeWidth="1.600" /><path d="M6 .5h4.500V5Z" fill="#666" /></Svg>
          </button>
        </div>
        <label className="ml-[12px] flex h-[22px] w-[202px] items-center border border-[#d9d9d9] pl-[8px] pr-[8px]">
          <input aria-label="Search Downloads" placeholder="Search Downloads" className="min-w-0 flex-1 outline-none placeholder:text-[#6d6d6d]" />
          <Svg size={12} box={12}><path d="m.8 11.200 4-4" stroke="#555" strokeWidth="1.800" /><circle cx="7.500" cy="4.500" r="3.300" stroke="#555" strokeWidth="1.400" /></Svg>
        </label>
      </div>
      <div className="flex min-h-0 flex-1 pt-px">
        <Tree />
        <div className="flex w-[15px] flex-col items-center justify-between bg-[#f0f0f0] py-1">
          <Chevron d={UP} size={9} color="#505050" w={2} />
          <span className="mt-[159px] h-[119px] w-full bg-[#cdcdcd]" />
          <span className="flex flex-1 items-end"><Chevron d={DOWN} size={9} color="#505050" w={2} /></span>
        </div>
        <div className="ml-[5px] flex flex-1 flex-col justify-between">
          <FileTable />
          <div className="flex h-[15px] items-center bg-[#f0f0f0] px-[4px]">
            <Chevron d={LEFT} size={9} color="#505050" w={2} />
            <span className="mx-[4px] h-full flex-1 bg-[#cdcdcd]" />
            <span className="pl-[3px]"><Chevron d={RIGHT} size={9} color="#505050" w={2} /></span>
          </div>
        </div>
      </div>
      <footer className="flex h-[25px] items-center pl-[14px] pr-[9px] text-[#1e395b]">
        <span className="flex-1">6 items</span>
        <button type="button" aria-label="Details view" className="flex h-[23px] w-[22px] items-center justify-center border border-[#26a0da] bg-[#cbe8f6]">
          <Svg size={16}><path d="M1 2.500h4v3H1ZM1 6.500h4v3H1ZM1 10.500h4v3H1Z" fill="#fff" stroke="#8c7f7f" /><path d="M7 4h3M11.500 4H15M7 8h3M11.500 8H15M7 12h3M11.500 12H15" stroke="#555" /></Svg>
        </button>
        <button type="button" aria-label="Large icons view" className="ml-[4px]"><Svg size={14}><rect x=".5" y="2.500" width="15" height="11" fill="#fff" stroke="#777" /><path d="M2.500 4.500h11v7h-11Z" fill="#6fa8dc" /><path d="M2.500 8.500c4-1 7 1 11 0v3h-11Z" fill="#23475c" /></Svg></button>
      </footer>
      <div role="tooltip" className="absolute left-[266px] top-[263px] w-[135px] whitespace-nowrap border border-[#767676] bg-white px-[5px] pb-[2px] pt-px leading-[15px] text-[#575757]">
        <p>Item type: PNG File</p>
        <p>Dimensions: 1489 x 744</p>
        <p>Size: 5.52 KB</p>
      </div>
    </section>
  );
}

/* ---------- watermark and build label ---------- */
function Watermark() {
  return (
    <div className="absolute bottom-[10px] right-[49px] flex items-center gap-[8px] font-['Roboto_Condensed','Liberation_Sans_Narrow','Roboto',sans-serif] text-[36px] leading-[60px] text-white/50">
      <span>ANY</span>
      <svg width="56" height="60" viewBox="0 0 56 60" fill="none" stroke="#fff" strokeOpacity=".5" strokeWidth="3.500" strokeLinejoin="round" strokeLinecap="round" aria-hidden="true">
        <path d="M7 8C3 7 2 8 2 12V50C2 54 4 55 8 52L50 27C53 25 53 23 50 22L16 3C13 1 11 2 11 5V43M16 14 49 33C53 35 53 37 50 39L18 56C14 58 11 58 10 54" />
      </svg>
      <span>RUN</span>
    </div>
  );
}

/* ---------- taskbar ---------- */
function Taskbar() {
  return (
    <footer className="relative flex h-10 items-stretch bg-[#03141f] bg-linear-to-r from-[#001a26] to-[#020a18] text-white">
      <button type="button" aria-label="Start" className="flex w-12 items-center justify-center">
        <Svg><path d="M0 2.300 6.500 1.400v6.200H0ZM7.300 1.300 16 0v7.600H7.300ZM0 8.400h6.500v6.200L0 13.700ZM7.300 8.400H16V16l-8.700-1.300Z" fill="#fff" /></Svg>
      </button>
      <label className="flex w-[288px] items-center gap-[11px] border border-[#d5d5d5] bg-[#f2f2f2] pl-[11px] text-[14px] text-[#333]">
        <Svg size={17} box={17}><circle cx="10.500" cy="6" r="5" stroke="#222" strokeWidth="1.300" /><path d="m7 9.500-6 6.500" stroke="#222" strokeWidth="1.500" /></Svg>
        <input aria-label="Search" placeholder="Type here to search" className="min-w-0 flex-1 bg-transparent outline-none placeholder:text-[#3a3a3a]" />
      </label>
      <button type="button" aria-label="Task view" className="flex w-12 items-center justify-center">
        <Svg><path d="M1 0v3h9V0M.5 5.500h10v5H.5ZM1 16v-3h9v3M14 0v3M14 7v9" stroke="#fff" strokeWidth="1.200" /><path d="M12.500 4h3v3h-3Z" fill="#fff" /></Svg>
      </button>
      <button type="button" aria-label="Edge" className="flex w-[52px] items-center justify-center pb-px pl-[2px]"><EdgeLogo size={24} id="edt" /></button>
      <button type="button" aria-label="File Explorer" className="flex w-12 items-center justify-center border-b-2 border-[#76b9ed] bg-[#33454f]">
        <Svg size={24} box={24}>
          <path d="M1 3h8l2 2h11v17H1Z" fill="#e8a33a" />
          <path d="M1 6h22v14H1Z" fill="#fddb72" />
          <path d="M5 20v-7h14v7h-3v-4H8v4Z" fill="#3f8fd0" />
        </Svg>
      </button>
      <button type="button" aria-label="Firefox" className="flex w-[50px] items-center justify-center"><FirefoxLogo size={24} id="fxt" /></button>
      <button type="button" aria-label="WinRAR" className="mx-1 flex w-10 items-center justify-center border-b-2 border-[#76b9ed]"><RarLogo size={24} /></button>
      <div className="flex flex-1 items-center justify-end">
        <span className="mr-[10px]"><Svg size={12} box={12}><path d="m1 9 5-5 5 5" stroke="#fff" strokeWidth="1.300" /></Svg></span>
        <span className="mr-[8px]"><Svg size={16}><rect x="3.500" y="4.500" width="7" height="7" rx="1" stroke="#fff" strokeWidth="1.200" /><path d="m10.500 7 2.500-1.500v5L10.500 9M4 1.500c2-1.500 5-1.500 7 0M4 14.500c2 1.500 5 1.500 7 0" stroke="#fff" strokeWidth="1.100" /></Svg></span>
        <span className="mr-[8px]"><Svg size={16}><path d="M5 3.500h10.500v8H4.500V8M10 11.500v3M6.500 14.500h7" stroke="#fff" /><path d="M.5 1.500h4v4h-4ZM2.500 5.500v9" stroke="#fff" /></Svg></span>
        <span className="mr-[4px]"><Svg size={16}><path d="M.5 5.500H3L6.500 2v12L3 10.500H.5Z" stroke="#fff" /><path d="M8.500 5.500c1.500 1.500 1.500 3.500 0 5M10.800 3.800c2.500 2.500 2.500 6 0 8.400M13 2c3.500 3.500 3.500 8.500 0 12" stroke="#fff" /></Svg></span>
        <div className="w-[64px] text-center text-[11px] leading-[18px]">
          <p>5:14 PM</p>
          <p>4/15/2025</p>
        </div>
        <button type="button" aria-label="Notifications" className="ml-[12px] mr-[20px]"><Svg size={16}><path d="M.5 1.500h15v11H11L8 15.300l-3-2.800H.5Z" stroke="#fff" strokeWidth="1.100" /></Svg></button>
        <span className="mr-[4px] h-full w-px bg-[#4e5a66]" />
      </div>
    </footer>
  );
}

export default function App() {
  return (
    <div className="flex min-h-screen flex-col bg-[#008ff0] font-['Open_Sans','Noto_Sans',sans-serif] text-black">
      <main className="relative flex-1 overflow-hidden bg-[linear-gradient(97deg,#00a4f8_0%,#00b2ff_22%,#00a8fb_36%,#0088f0_55%,#0064dc_75%,#004ecc_86%,#003fb4_100%)]">
        <Desktop />
        <Watermark />
        <div className="absolute bottom-0 right-[4px] text-right text-[11px] leading-[17px] text-white">
          <p>Test Mode</p>
          <p>Windows 10 Pro</p>
          <p>Build 19041.vb_release.191206-1406</p>
        </div>
        <ArchiveWindow />
        <ExplorerWindow />
      </main>
      <Taskbar />
    </div>
  );
}
